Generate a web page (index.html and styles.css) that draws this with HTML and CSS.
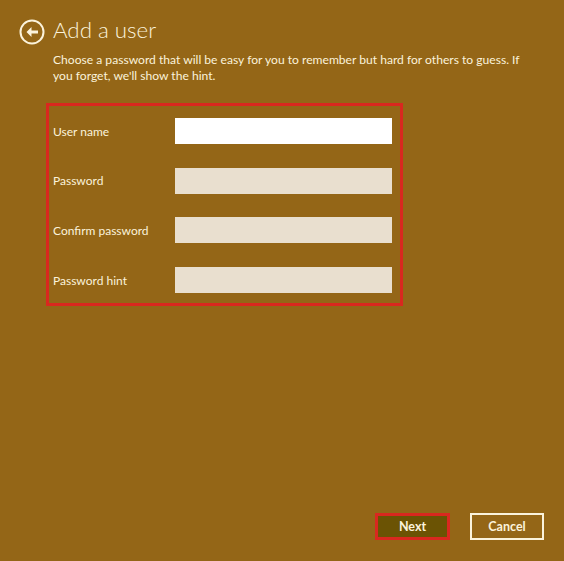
FILE: index.html
```html
<!DOCTYPE html>
<html lang="en">
<head>
    <meta charset="UTF-8">
    <meta name="viewport" content="width=device-width, initial-scale=1.0">
    <title>Add a user</title>
    <link rel="stylesheet" href="styles.css">
</head>
<body>
    <div class="page">
        <div class="header">
            <svg class="back-icon" width="26" height="26" viewBox="0 0 26 26" aria-hidden="true">
                <circle cx="13" cy="13" r="11.5" fill="none" stroke="#fbf3dc" stroke-width="2"/>
                <path d="M7.5 13 L12.5 8 V11.4 H19 V14.6 H12.5 V18 Z" fill="#fbf3dc"/>
            </svg>
            <h1 class="page-title">Add a user</h1>
        </div>

        <p class="intro">Choose a password that will be easy for you to remember but hard for others to guess. If you forget, we'll show the hint.</p>

        <form class="user-form">
            <div class="form-row">
                <label for="userName">User name</label>
                <input type="text" id="userName" class="active">
            </div>
            <div class="form-row">
                <label for="password">Password</label>
                <input type="text" id="password">
            </div>
            <div class="form-row">
                <label for="confirmPassword">Confirm password</label>
                <input type="text" id="confirmPassword">
            </div>
            <div class="form-row">
                <label for="passwordHint">Password hint</label>
                <input type="text" id="passwordHint">
            </div>
        </form>

        <div class="actions">
            <button class="next-btn">Next</button>
            <button class="cancel-btn">Cancel</button>
        </div>
    </div>
</body>
</html>
```

FILE: styles.css
```css
html, body {
    margin: 0;
    padding: 0;
}

body {
    background-color: #946617;
    color: #fbf3dc;
    font-family: Lato, "Open Sans", sans-serif;
}

.page {
    display: flex;
    flex-direction: column;
    box-sizing: border-box;
    height: 561px;
    padding: 19px 20px 21px 19px;
}

.header {
    display: flex;
    align-items: center;
    gap: 8px;
    height: 26px;
}

.back-icon {
    flex: none;
}

.page-title {
    margin: -4px 0 0;
    font-size: 22.3px;
    font-weight: 300;
    line-height: 26px;
}

.intro {
    margin: 7px 0 0 34px;
    width: 480px;
    font-size: 12.1px;
    line-height: 16px;
}

.user-form {
    box-sizing: border-box;
    display: flex;
    flex-direction: column;
    gap: 23.7px;
    width: 357px;
    height: 203px;
    margin: 19px 0 0 27px;
    padding: 12px 8px 10px 4px;
    border: 3px solid #d9281f;
}

.form-row {
    display: flex;
    align-items: center;
    justify-content: space-between;
    height: 26px;
}

.form-row label {
    font-size: 12px;
}

.form-row input {
    box-sizing: border-box;
    width: 217px;
    height: 26px;
    padding: 0;
    border: none;
    border-radius: 0;
    background-color: #e9dfcf;
}

.form-row input.active {
    background-color: #fff;
}

.actions {
    display: flex;
    justify-content: flex-end;
    align-items: flex-start;
    gap: 20px;
    margin-top: auto;
}

.actions button {
    box-sizing: border-box;
    height: 27px;
    padding: 0;
    color: #fbf3dc;
    font-family: inherit;
    font-size: 12.5px;
    font-weight: 700;
}

.next-btn {
    width: 75px;
    background-color: #6b5304;
    border: 3px solid #d9281f;
}

.cancel-btn {
    width: 74px;
    background-color: transparent;
    border: 2px solid #fbf3dc;
}
```
